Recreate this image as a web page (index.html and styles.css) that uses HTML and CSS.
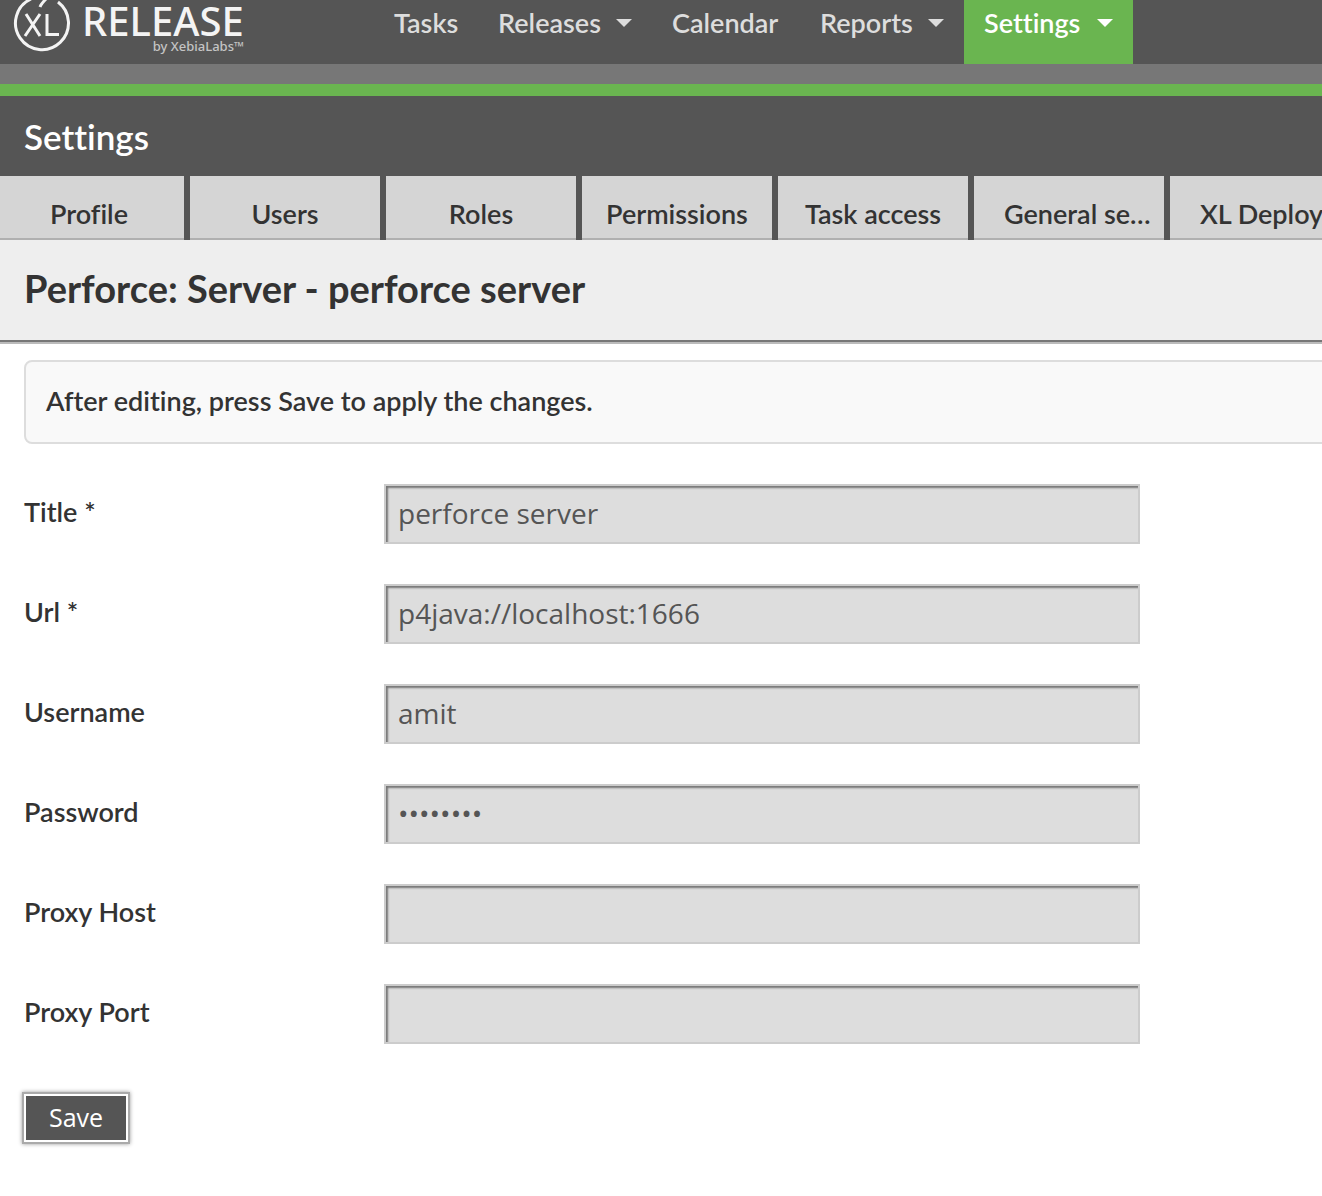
FILE: index.html
```html
<!DOCTYPE html>
<html lang="en">
<head>
<meta charset="utf-8">
<title>XL Release - Settings</title>
<link rel="stylesheet" href="styles.css">
</head>
<body>
<header class="topbar">
  <a class="logo" href="#" aria-label="XL Release">
    <svg class="logo-mark" width="60" height="56" viewBox="0 0 60 56" fill="none" stroke="currentColor" aria-hidden="true">
      <path stroke-width="3" d="M46 2A26.500 26.500 0 1 1 19 -1M28 7Q29 4 34 -1"/>
      <path stroke-width="3" d="M14 14L28 36M28 14L13 36M35 14V34.500H47"/>
    </svg>
    <span class="logo-text">
      <span class="logo-name">RELEASE</span>
      <span class="logo-by">by XebiaLabs™</span>
    </span>
  </a>
  <nav class="menu">
    <a class="menu-item" href="#">Tasks</a>
    <a class="menu-item" href="#">Releases <span class="caret"></span></a>
    <a class="menu-item" href="#">Calendar</a>
    <a class="menu-item" href="#">Reports <span class="caret"></span></a>
    <a class="menu-item active" href="#">Settings <span class="caret"></span></a>
  </nav>
</header>
<div class="strip"></div>
<section class="section-head">
  <h1 class="section-title">Settings</h1>
  <nav class="tabs">
    <a class="tab" href="#">Profile</a>
    <a class="tab" href="#">Users</a>
    <a class="tab" href="#">Roles</a>
    <a class="tab" href="#">Permissions</a>
    <a class="tab" href="#">Task access</a>
    <a class="tab long" href="#">General settings</a>
    <a class="tab long" href="#">XL Deploy</a>
  </nav>
</section>
<div class="page-head">
  <h2 class="page-title">Perforce: Server - perforce server</h2>
</div>
<main class="content">
  <p class="notice">After editing, press Save to apply the changes.</p>
  <form class="form">
    <div class="row"><label for="title">Title *</label><input class="field" id="title" type="text" value="perforce server"></div>
    <div class="row"><label for="url">Url *</label><input class="field" id="url" type="text" value="p4java://localhost:1666"></div>
    <div class="row"><label for="username">Username</label><input class="field" id="username" type="text" value="amit"></div>
    <div class="row"><label for="password">Password</label><input class="field" id="password" type="password" value="password"></div>
    <div class="row"><label for="proxy-host">Proxy Host</label><input class="field" id="proxy-host" type="text"></div>
    <div class="row"><label for="proxy-port">Proxy Port</label><input class="field" id="proxy-port" type="text"></div>
    <button class="save" type="button">Save</button>
  </form>
</main>
</body>
</html>
```
FILE: styles.css
```css
* { box-sizing: border-box; }

body {
  margin: 0;
  overflow-x: hidden;
  background: #fff;
  color: #333;
  font: 600 27px/32px Lato, "Open Sans", sans-serif;
  font-variant-ligatures: none;
}

a { color: inherit; text-decoration: none; }

.topbar {
  display: flex;
  height: 64px;
  background: #555;
  color: #ddd;
}

.logo {
  display: flex;
  flex: none;
  width: 374px;
  padding-left: 12px;
  color: #f4f4f4;
}

.logo-text {
  display: flex;
  flex-direction: column;
  width: 172px;
  padding-left: 10px;
  font-family: "Noto Sans", sans-serif;
  font-weight: 500;
}

.logo-name { font-size: 40px; line-height: 42px; }

.logo-by {
  align-self: flex-end;
  color: #c4c4c4;
  font-size: 13px;
  line-height: 8px;
}

.menu {
  display: grid;
  grid-template-columns: 104px 174px 148px 164px 169px;
}

.menu-item {
  display: flex;
  align-items: center;
  justify-content: space-between;
  padding: 0 20px 18px;
}

.menu-item.active { background: #6ab550; color: #fff; }

.caret {
  border: 8px solid transparent;
  border-top-color: currentColor;
  border-bottom: 0;
}

.strip {
  height: 32px;
  background: #777;
  border-bottom: 12px solid #6ab550;
}

.section-head { background: #555; }

.section-title {
  margin: 0;
  padding: 20px 24px;
  color: #fff;
  font-size: 35px;
  font-weight: 600;
  line-height: 40px;
}

.tabs {
  display: flex;
  gap: 6px;
  margin-left: -6px;
  overflow: hidden;
}

.tab {
  flex: none;
  width: 190px;
  padding: 22px 12px 8px;
  overflow: hidden;
  border-bottom: 2px solid #b0b0b0;
  background: #d5d5d5;
  text-align: center;
  text-overflow: ellipsis;
  white-space: nowrap;
}

.tab.long { padding-left: 30px; text-align: left; }

.page-head {
  padding: 28px 24px 32px;
  border-bottom: 2px solid #777;
  background: #eee;
  box-shadow: 0 2px #bbb;
}

.page-title {
  margin: 0;
  font-size: 38px;
  font-weight: 700;
  line-height: 40px;
}

.content { padding: 18px 0 52px 24px; }

.notice {
  margin: 0 -8px 40px 0;
  padding: 23px 20px 25px;
  border: 2px solid #ddd;
  border-radius: 8px;
  background: #f9f9f9;
}

.form {
  display: flex;
  flex-direction: column;
  align-items: flex-start;
  gap: 40px;
}

.row {
  display: grid;
  grid-template-columns: 360px minmax(0, 756px);
  align-items: center;
  width: 100%;
}

.row label { padding-bottom: 4px; }

.field {
  width: 100%;
  height: 60px;
  padding: 0 12px 2px;
  border: 2px solid #ccc;
  border-radius: 0;
  outline: 0;
  background: #ddd;
  box-shadow: inset 2px 2px 2px #777;
  color: #555;
  font: 400 28px/36px "Open Sans", "Noto Sans", sans-serif;
}

.save {
  width: 104px;
  height: 48px;
  margin: 10px 0 0;
  padding: 0 0 2px;
  border: 2px solid #fff;
  background: #555;
  box-shadow: 0 0 0 2px #aaa, 0 0 4px 2px #999;
  color: #fff;
  font: 400 25px/32px "Open Sans", "Noto Sans", sans-serif;
}
```
